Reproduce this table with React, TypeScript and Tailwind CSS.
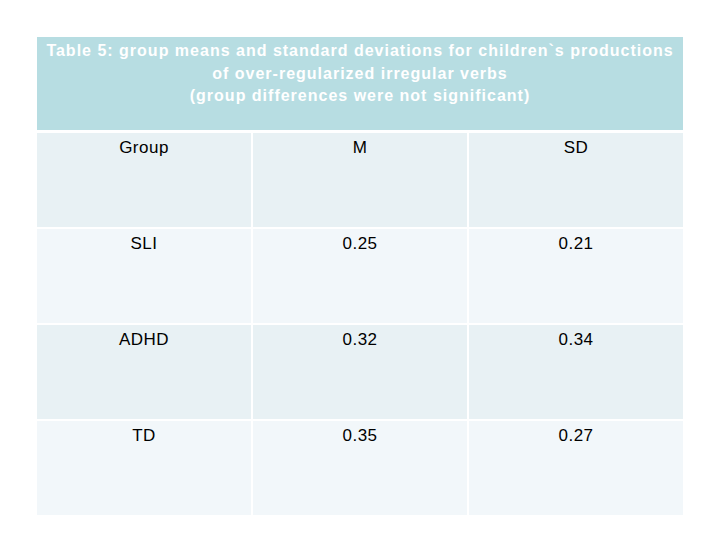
const rows = [
  { group: "Group", m: "M", sd: "SD" },
  { group: "SLI", m: "0.25", sd: "0.21" },
  { group: "ADHD", m: "0.32", sd: "0.34" },
  { group: "TD", m: "0.35", sd: "0.27" },
];

const App = () => {
  return (
    <div className="w-[720px] h-[540px] bg-white pt-[37px] pl-[37px] font-['Liberation_Sans',Arial,sans-serif]">
      <div className="w-[646px]">
        {/* Title band */}
        <div className="h-[93px] bg-[#b7dde2] text-white font-bold text-[16px] leading-[22.5px] tracking-[1px] text-center pt-[3px]">
          <div>Table 5: group means and standard deviations for children`s productions</div>
          <div>of over-regularized irregular verbs</div>
          <div>(group differences were not significant)</div>
        </div>

        {/* Table body */}
        <div className="mt-[3px] grid grid-cols-3 gap-[2px]">
          {rows.map((r, i) => {
            const bg = i % 2 === 0 ? "bg-[#e8f1f4]" : "bg-[#f2f7fa]";
            return [r.group, r.m, r.sd].map((cell, j) => (
              <div
                key={`${i}-${j}`}
                className={`${bg} h-[94px] pt-[5px] text-center text-[17px] leading-[20px] tracking-[0.5px] text-black`}
              >
                {cell}
              </div>
            ));
          })}
        </div>
      </div>
    </div>
  );
};

export default App;
